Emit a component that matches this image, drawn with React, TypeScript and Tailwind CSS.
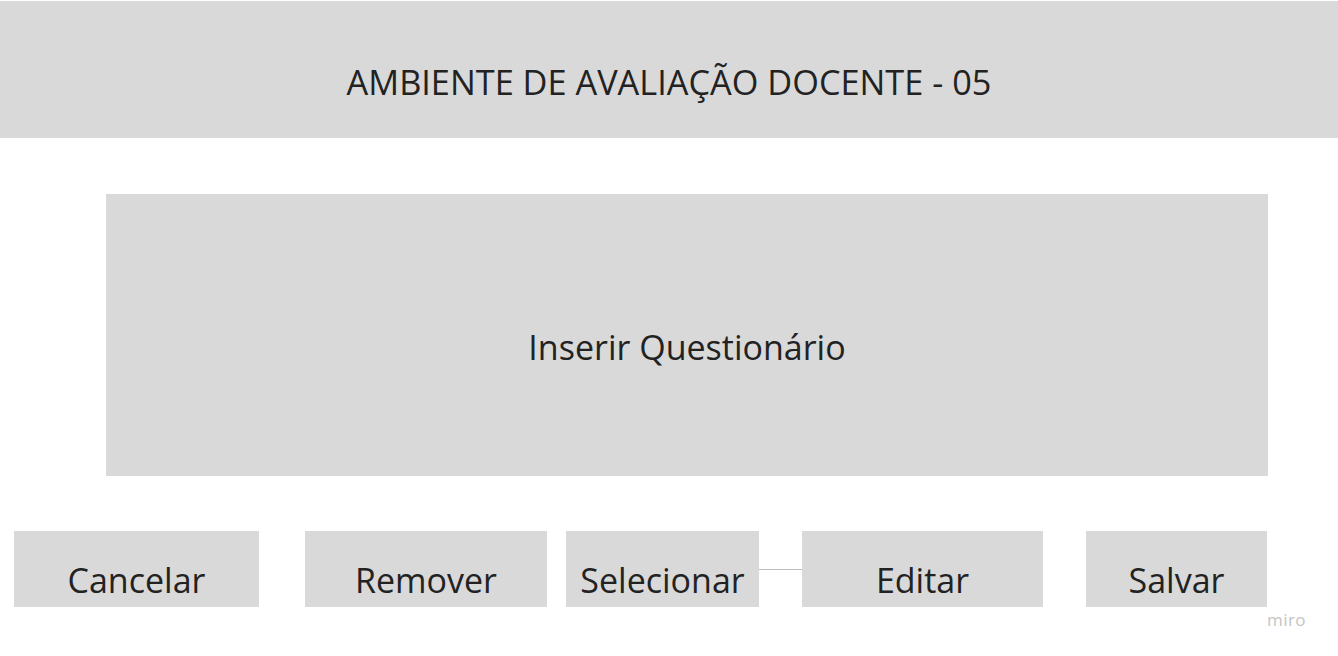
import React from 'react';

const buttons = [
  { label: 'Cancelar', w: 'w-[245px]', ml: 'ml-[14px]' },
  { label: 'Remover', w: 'w-[242px]', ml: 'ml-[46px]' },
  { label: 'Selecionar', w: 'w-[193px]', ml: 'ml-[19px]' },
  { label: 'Editar', w: 'w-[241px]', ml: 'ml-[43px]' },
  { label: 'Salvar', w: 'w-[181px]', ml: 'ml-[43px]' },
];

const App: React.FC = () => {
  return (
    <div className="w-[1338px] h-[656px] bg-white text-[#222] overflow-hidden" style={{ fontFamily: '"Open Sans", sans-serif' }}>
      {/* header */}
      <div className="mt-px h-[137px] bg-[#d9d9d9] flex justify-center pt-[60px]">
        <h1 className="text-[34.3px] leading-[42px] font-normal">AMBIENTE DE AVALIAÇÃO DOCENTE - 05</h1>
      </div>

      {/* questionario */}
      <div className="mt-[56px] ml-[106px] w-[1162px] h-[282px] bg-[#d9d9d9] flex justify-center pt-[131px]">
        <p className="text-[34px] leading-[44px]">Inserir Questionário</p>
      </div>

      {/* actions */}
      <div className="mt-[55px] flex items-start">
        {buttons.map((b, i) => (
          <React.Fragment key={b.label}>
            <div className={`${b.w} ${i === 3 ? '' : b.ml} h-[76px] bg-[#d9d9d9] flex justify-center pt-[27px]`}>
              <span className="text-[34px] leading-[44px] whitespace-nowrap">{b.label}</span>
            </div>
            {i === 2 && <div className="w-[43px] h-px bg-[#bdbdbd] mt-[38px]" />}
          </React.Fragment>
        ))}
      </div>

      <div className="flex justify-end pr-[32px]">
        <span className="text-[17px] text-[#c4c4c4] tracking-wide">miro</span>
      </div>
    </div>
  );
};

export default App;
